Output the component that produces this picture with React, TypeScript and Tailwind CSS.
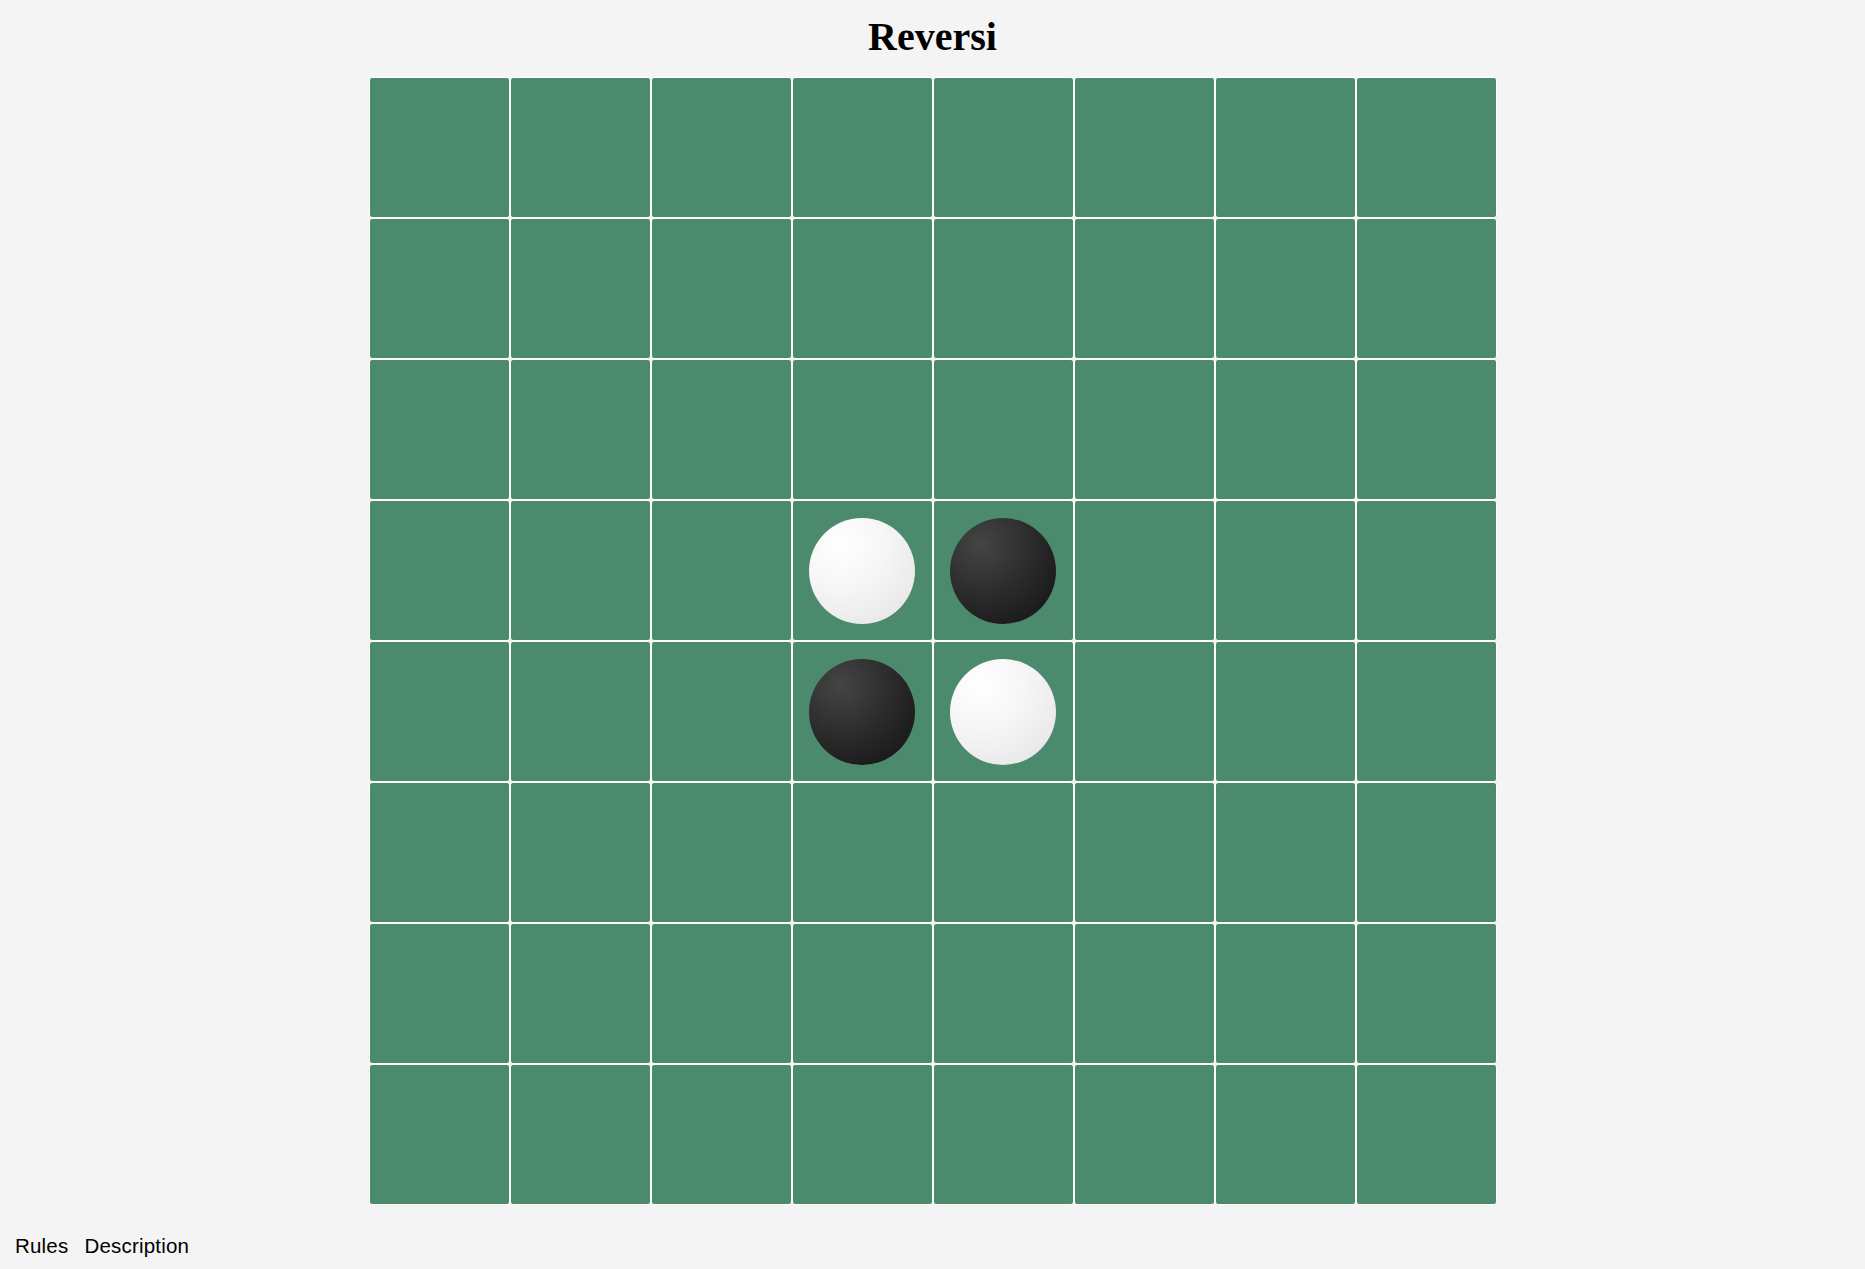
import React from 'react';

type Piece = 'b' | 'w' | null;

// initial position: d4/e5 white, e4/d5 black
function startBoard(): Piece[] {
  const cells: Piece[] = Array(64).fill(null);
  cells[3 * 8 + 3] = 'w';
  cells[3 * 8 + 4] = 'b';
  cells[4 * 8 + 3] = 'b';
  cells[4 * 8 + 4] = 'w';
  return cells;
}

function Disc({ color }: { color: 'b' | 'w' }) {
  return color === 'w' ? (
    <div className="w-[106px] h-[106px] rounded-full bg-[radial-gradient(circle_at_30%_25%,#ffffff_0%,#f6f6f6_40%,#e2e2e2_100%)]" />
  ) : (
    <div className="w-[106px] h-[106px] rounded-full bg-[radial-gradient(circle_at_30%_25%,#454545_0%,#2c2c2c_45%,#111111_100%)]" />
  );
}

export default function App() {
  const cells = startBoard();

  return (
    <div className="min-h-[1269px] bg-[#f4f4f4] flex flex-col">
      <h1 className="pt-[14px] mb-[17px] text-center text-[40px] leading-[46px] font-bold text-black font-['Liberation_Serif',serif]">
        Reversi
      </h1>

      <div className="mx-auto grid grid-cols-8 w-[1128px]">
        {cells.map((c, i) => (
          <div
            key={i}
            className="h-[141px] border border-white rounded-[3px] bg-[#4c8a6e] flex items-center justify-center"
          >
            {c && <Disc color={c} />}
          </div>
        ))}
      </div>

      <div className="mt-[29px] pl-[15px] flex gap-[16px] text-[20.5px] leading-[24px] tracking-[0.2px] text-black font-['Liberation_Sans',sans-serif]">
        <a>Rules</a>
        <a>Description</a>
      </div>
    </div>
  );
}
